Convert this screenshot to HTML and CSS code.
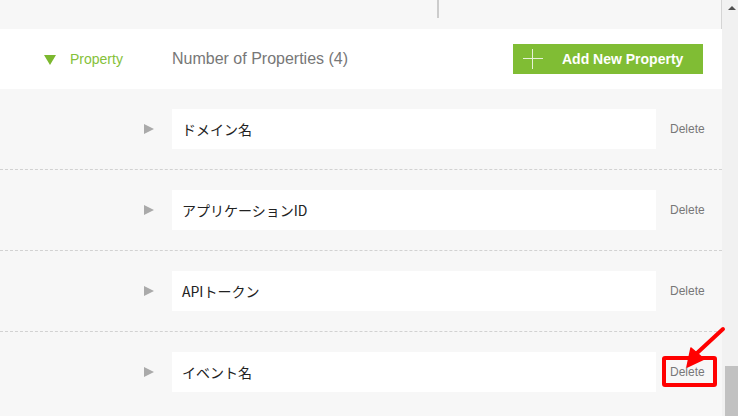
FILE: index.html
```html
<!DOCTYPE html>
<html lang="ja">
<head>
<meta charset="utf-8">
<title>Property</title>
<link rel="stylesheet" href="styles.css">
</head>
<body>
<div class="page">
  <div class="main">
    <div class="topbar"><div class="divider"></div></div>
    <div class="header">
      <span class="caret-down"></span>
      <span class="section-label">Property</span>
      <span class="count">Number of Properties (4)</span>
      <button class="add-btn"><span class="plus"></span><span class="add-text">Add New Property</span></button>
    </div>
    <div class="rows">
      <div class="row">
        <span class="caret-right"></span>
        <div class="field">ドメイン名</div>
        <span class="delete">Delete</span>
      </div>
      <div class="row">
        <span class="caret-right"></span>
        <div class="field">アプリケーションID</div>
        <span class="delete">Delete</span>
      </div>
      <div class="row">
        <span class="caret-right"></span>
        <div class="field">APIトークン</div>
        <span class="delete">Delete</span>
      </div>
      <div class="row last">
        <span class="caret-right"></span>
        <div class="field">イベント名</div>
        <span class="delete highlighted">Delete</span>
      </div>
    </div>
  </div>
  <div class="scrollbar">
    <span class="scroll-up"></span>
    <div class="thumb"></div>
  </div>
  <svg class="arrow" width="60" height="60" viewBox="0 0 60 60">
    <line x1="40" y1="3" x2="13" y2="28" stroke="#ff0000" stroke-width="4" stroke-linecap="round"/>
    <polygon points="4,41 8,22 21,33" fill="#ff0000" stroke="#ff0000" stroke-width="1.5" stroke-linejoin="round"/>
  </svg>
</div>
</body>
</html>
```
FILE: styles.css
```css
*, *::before, *::after { box-sizing: border-box; }
html, body {
  margin: 0;
  padding: 0;
  width: 738px;
  height: 416px;
  overflow: hidden;
  background: #f7f7f7;
  font-family: "Liberation Sans", Arial, "Noto Sans CJK JP", sans-serif;
}
.page {
  position: relative;
  display: flex;
  height: 416px;
}
.main {
  width: 722px;
  flex: none;
}
.topbar {
  height: 29px;
  background: #f7f7f7;
  border-right: 1px solid #d4d4d4;
  padding-left: 437px;
}
.divider {
  width: 2px;
  height: 18px;
  background: #cccccc;
}
.header {
  height: 60px;
  background: #ffffff;
  display: flex;
  align-items: center;
  padding-left: 44px;
  padding-right: 19px;
}
.caret-down {
  width: 0;
  height: 0;
  border-left: 6px solid transparent;
  border-right: 6px solid transparent;
  border-top: 10px solid #7cb82f;
  margin-top: 1px;
}
.section-label {
  margin-left: 14px;
  font-size: 14px;
  color: #85c13a;
  width: 102px;
}
.count {
  font-size: 16px;
  color: #777777;
}
.add-btn {
  margin-left: auto;
  width: 190px;
  height: 30px;
  border: none;
  background: #80bd34;
  display: flex;
  align-items: center;
  padding: 0 0 0 10px;
  font-family: inherit;
}
.plus {
  position: relative;
  width: 20px;
  height: 20px;
  flex: none;
}
.plus::before, .plus::after {
  content: "";
  position: absolute;
  background: #e6f2d6;
}
.plus::before { left: 0; top: 9px; width: 20px; height: 1px; }
.plus::after { left: 9px; top: 0; width: 1px; height: 20px; }
.add-text {
  margin-left: 19px;
  color: #ffffff;
  font-weight: bold;
  font-size: 14px;
}
.rows {
  display: flex;
  flex-direction: column;
}
.row {
  display: flex;
  align-items: center;
  padding: 20px 0 20px 144px;
  border-bottom: 1px dashed #d2d2d2;
}
.row.last { border-bottom: none; }
.caret-right {
  width: 0;
  height: 0;
  border-top: 5px solid transparent;
  border-bottom: 5px solid transparent;
  border-left: 10px solid #aaaaaa;
}
.field {
  margin-left: 18px;
  width: 484px;
  height: 40px;
  background: #ffffff;
  display: flex;
  align-items: center;
  padding-left: 10px;
  font-family: "Noto Sans CJK JP", "Liberation Sans", sans-serif;
  font-size: 14px;
  color: #222222;
}
.delete {
  margin-left: 14px;
  font-size: 12px;
  color: #777777;
  position: relative;
}
.delete.highlighted::after {
  content: "";
  position: absolute;
  left: -8px;
  top: -9px;
  width: 55px;
  height: 31px;
  border: 4px solid #ff0000;
  border-radius: 3px;
}
.arrow {
  position: absolute;
  left: 683px;
  top: 326px;
  z-index: 2;
  overflow: visible;
}
.scrollbar {
  width: 16px;
  flex: none;
  background: #f1f1f1;
  display: flex;
  flex-direction: column;
  align-items: flex-end;
}
.scroll-up {
  position: absolute;
  left: 728px;
  top: 6px;
  width: 0;
  height: 0;
  border-left: 4px solid transparent;
  border-right: 4px solid transparent;
  border-bottom: 4px solid #505050;
}
.thumb {
  margin-top: auto;
  width: 13px;
  height: 50px;
  background: #c1c1c1;
}
```
